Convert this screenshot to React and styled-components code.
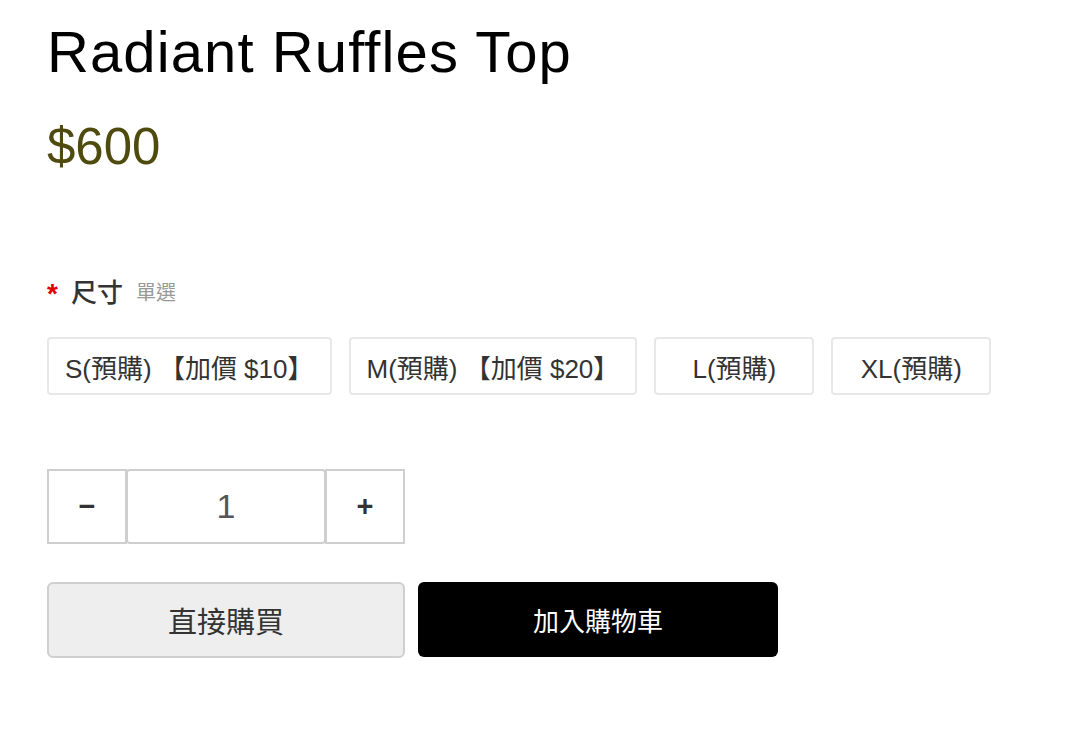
import React, { useState } from 'react';
import styled, { createGlobalStyle } from 'styled-components';

const GlobalStyle = createGlobalStyle`
    html, body {
        margin: 0;
        padding: 0;
        background: #fff;
    }
    body {
        font-family: "Liberation Sans", "Noto Sans CJK TC", sans-serif;
        color: #333;
    }
`

const sizes = [
    { id: 's', label: 'S(預購) 【加價 $10】' },
    { id: 'm', label: 'M(預購) 【加價 $20】' },
    { id: 'l', label: 'L(預購)' },
    { id: 'xl', label: 'XL(預購)' },
];

function App() {
    const [ qty, setQty ] = useState(1);
    const [ size, setSize ] = useState(null);

    return (
        <Page>
            <GlobalStyle />
            <Title>Radiant Ruffles Top</Title>
            <Price>$600</Price>

            <OptionLabel>
                <Required>*</Required>
                <LabelName>尺寸</LabelName>
                <LabelHint>單選</LabelHint>
            </OptionLabel>

            <Options>
                {sizes.map(s => (
                    <OptionButton
                        key={s.id}
                        $wide={s.label.length > 8}
                        $active={size === s.id}
                        onClick={() => setSize(s.id)}
                    >
                        {s.label}
                    </OptionButton>
                ))}
            </Options>

            <Quantity>
                <StepButton onClick={() => setQty(q => Math.max(1, q - 1))}>−</StepButton>
                <QtyInput value={qty} readOnly />
                <StepButton onClick={() => setQty(q => q + 1)}>+</StepButton>
            </Quantity>

            <Actions>
                <BuyNow>直接購買</BuyNow>
                <AddToCart>加入購物車</AddToCart>
            </Actions>
        </Page>
    )
}

export default App;

const Page = styled.div`
    padding: 17px 47px 40px;
`

const Title = styled.h1`
    margin: 0;
    font-size: 58px;
    line-height: 70px;
    font-weight: 400;
    color: #000;
    letter-spacing: 1.1px;
`

const Price = styled.div`
    margin-top: 30px;
    font-size: 51px;
    line-height: 60px;
    color: #4f4b0f;
`

const OptionLabel = styled.div`
    margin-top: 95px;
    height: 36px;
    display: flex;
    align-items: center;
`

const Required = styled.span`
    color: #e00000;
    font-size: 28px;
    font-weight: 700;
    margin-right: 13px;
    padding-top: 8px;
`

const LabelName = styled.span`
    font-size: 26px;
    font-weight: 500;
    color: #333;
    margin-right: 13px;
`

const LabelHint = styled.span`
    font-size: 20px;
    color: #999;
    padding-top: 3px;
`

const Options = styled.div`
    margin-top: 29px;
    display: flex;
    gap: 17px;
`

const OptionButton = styled.button`
    height: 58px;
    min-width: ${props => props.$wide ? 'auto' : '160px'};
    padding: 0 16px 0 16px;
    border: 2px solid ${props => props.$active ? '#333' : '#e8e8e8'};
    border-radius: 4px;
    background: #fff;
    font-family: inherit;
    font-size: 26px;
    color: #333;
    cursor: pointer;
    white-space: nowrap;
`

const Quantity = styled.div`
    margin-top: 74px;
    display: flex;
    height: 75px;
`

const StepButton = styled.button`
    width: 80px;
    height: 75px;
    border: 2px solid #cfcfcf;
    background: #fff;
    font-family: inherit;
    font-size: 29px;
    font-weight: 700;
    color: #333;
    padding: 0;
    cursor: pointer;

    & + input, input + & {
        margin-left: -1px;
    }
`

const QtyInput = styled.input`
    width: 200px;
    height: 75px;
    box-sizing: border-box;
    border: 2px solid #cfcfcf;
    border-radius: 4px;
    text-align: center;
    font-family: inherit;
    font-size: 34px;
    color: #555;
    outline: none;
    padding: 0;
`

const Actions = styled.div`
    margin-top: 38px;
    display: flex;
    gap: 13px;
`

const BuyNow = styled.button`
    width: 358px;
    height: 76px;
    border: 2px solid #cfcfcf;
    border-radius: 6px;
    background: #eeeeee;
    font-family: inherit;
    font-size: 29px;
    color: #333;
    cursor: pointer;
`

const AddToCart = styled(BuyNow)`
    width: 360px;
    height: 75px;
    border: none;
    background: #000;
    color: #fff;
    font-size: 26px;
`
